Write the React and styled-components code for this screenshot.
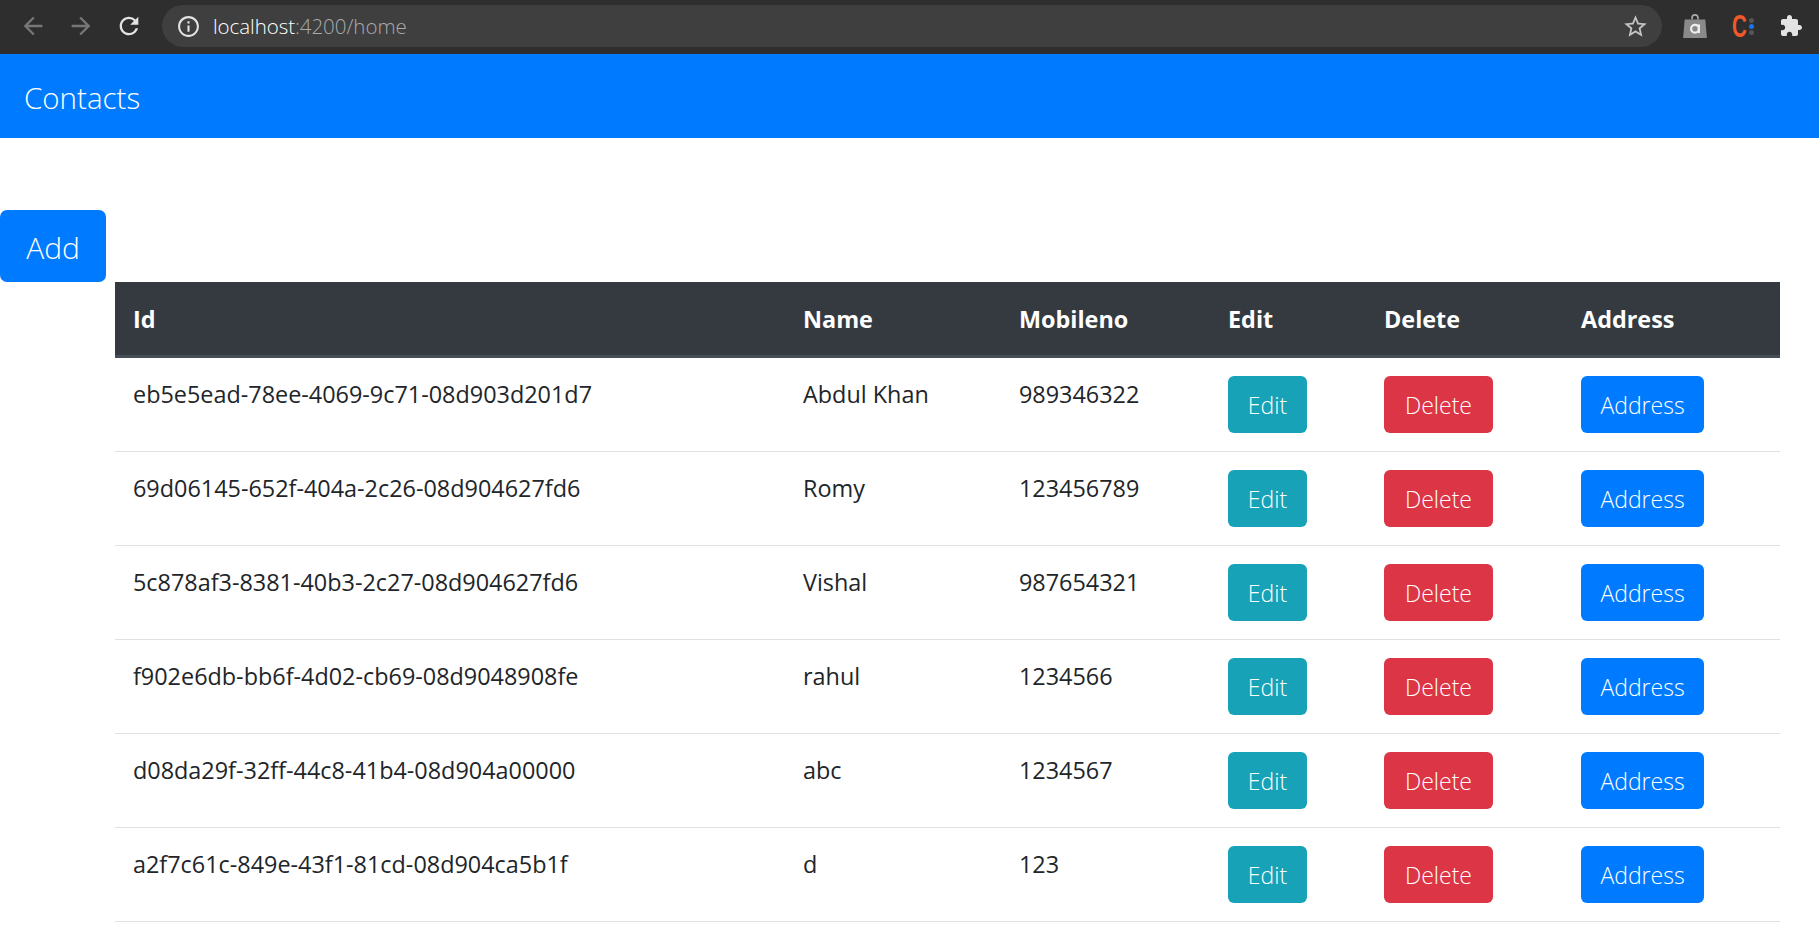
import React from "react";
import styled, { createGlobalStyle } from "styled-components";

const contacts = [
  { id: "eb5e5ead-78ee-4069-9c71-08d903d201d7", name: "Abdul Khan", mobile: "989346322" },
  { id: "69d06145-652f-404a-2c26-08d904627fd6", name: "Romy", mobile: "123456789" },
  { id: "5c878af3-8381-40b3-2c27-08d904627fd6", name: "Vishal", mobile: "987654321" },
  { id: "f902e6db-bb6f-4d02-cb69-08d9048908fe", name: "rahul", mobile: "1234566" },
  { id: "d08da29f-32ff-44c8-41b4-08d904a00000", name: "abc", mobile: "1234567" },
  { id: "a2f7c61c-849e-43f1-81cd-08d904ca5b1f", name: "d", mobile: "123" },
];

const GlobalStyle = createGlobalStyle`
  html, body {
    margin: 0;
    height: 100%;
    overflow: hidden;
    background: #fff;
    font-family: "Open Sans", "Liberation Sans", sans-serif;
    color: #212529;
  }
  * { box-sizing: border-box; }
`;

const Toolbar = styled.div`
  height: 54px;
  background: #2e2e2e;
  display: flex;
  align-items: center;
  padding: 0 16px 2px 19px;
`;

const NavIcons = styled.div`
  display: flex;
  align-items: center;
  gap: 20px;
  margin-right: 19px;
`;

const Icon = styled.svg`
  width: ${(p) => p.$size || 28}px;
  height: ${(p) => p.$size || 28}px;
  fill: ${(p) => p.$color || "#e3e3e3"};
  flex: none;
  display: block;
`;

const Omnibox = styled.div`
  flex: 1;
  height: 42px;
  background: #3f3f3f;
  border-radius: 21px;
  display: flex;
  align-items: center;
  padding: 0 13px 0 14px;
  font-size: 20.5px;
`;

const Url = styled.span`
  margin-left: 12px;
  flex: 1;
  color: #fff;
  font-weight: 300;
  letter-spacing: -0.05px;
  span {
    color: #aaa;
  }
`;

const Extensions = styled.div`
  display: flex;
  align-items: center;
  margin-left: 20px;
`;

const LogoC = styled.div`
  display: flex;
  align-items: center;
  width: 23px;
  margin: 0 24px;
  color: #f1592a;
  font-family: "Liberation Sans", sans-serif;
  font-weight: 700;
  font-size: 31px;
  line-height: 1;
`;

const LogoLetter = styled.span`
  display: inline-block;
  width: 15px;
  transform: scaleX(0.66);
  transform-origin: left center;
`;

const Dots = styled.div`
  display: flex;
  flex-direction: column;
  gap: 1px;
  margin-left: 2px;
`;

const Dot = styled.i`
  width: 5px;
  height: 5px;
  border-radius: 50%;
  background: ${(p) => p.$color};
`;

const Navbar = styled.nav`
  height: 84px;
  background: #007bff;
  display: flex;
  align-items: center;
  padding: 2px 24px 0;
`;

const Brand = styled.a`
  color: #fff;
  font-size: 29.5px;
  font-weight: 300;
`;

const Content = styled.main`
  padding-top: 72px;
`;

const AddButton = styled.button`
  display: block;
  width: 106px;
  height: 72px;
  padding: 2px 0 0;
  background: #007bff;
  border: none;
  border-radius: 7px;
  color: #fff;
  font-family: inherit;
  font-size: 30px;
  font-weight: 300;
`;

const Table = styled.table`
  width: 1665px;
  margin-left: 115px;
  border-collapse: separate;
  border-spacing: 0;
  table-layout: fixed;
`;

const Head = styled.th`
  background: #343a40;
  color: #fff;
  text-align: left;
  font-size: 23.4px;
  font-weight: 700;
  height: 76px;
  padding: 0 18px;
  border-bottom: 3px solid #454d55;
  width: ${(p) => p.$width}px;
`;

const Cell = styled.td`
  vertical-align: top;
  padding: 18px;
  font-size: 23.4px;
  line-height: 36px;
  height: 94px;
  border-bottom: 1px solid #dee2e6;
`;

const ActionButton = styled.button`
  display: block;
  width: ${(p) => p.$width}px;
  height: 57px;
  padding: 1px 0 0;
  background: ${(p) => p.$bg};
  border: none;
  border-radius: 6px;
  color: #fff;
  font-family: inherit;
  font-size: 23px;
  font-weight: 300;
`;

const columns = [
  ["Id", 670],
  ["Name", 216],
  ["Mobileno", 209],
  ["Edit", 156],
  ["Delete", 197],
  ["Address", 217],
];

export default function App() {
  return (
    <>
      <GlobalStyle />
      <Toolbar>
        <NavIcons>
          <Icon viewBox="0 0 24 24" $color="#777">
            <path d="M20 11H7.83l5.59-5.59L12 4l-8 8 8 8 1.41-1.41L7.83 13H20v-2z" />
          </Icon>
          <Icon viewBox="0 0 24 24" $color="#777">
            <path d="M4 11h12.17l-5.59-5.59L12 4l8 8-8 8-1.41-1.41L16.17 13H4v-2z" />
          </Icon>
          <Icon viewBox="0 0 24 24">
            <path d="M17.65 6.35A7.958 7.958 0 0 0 12 4c-4.42 0-7.99 3.58-7.99 8s3.57 8 7.99 8c3.73 0 6.84-2.55 7.73-6h-2.08A5.99 5.99 0 0 1 12 18c-3.31 0-6-2.69-6-6s2.69-6 6-6c1.66 0 3.14.69 4.22 1.78L13 11h7V4l-2.35 2.35z" />
          </Icon>
        </NavIcons>
        <Omnibox>
          <Icon viewBox="0 0 24 24" $size={25}>
            <path d="M11 7h2v2h-2V7zm0 4h2v6h-2v-6zm1-9C6.48 2 2 6.48 2 12s4.48 10 10 10 10-4.48 10-10S17.52 2 12 2zm0 18c-4.41 0-8-3.59-8-8s3.59-8 8-8 8 3.59 8 8-3.59 8-8 8z" />
          </Icon>
          <Url>
            localhost<span>:4200/home</span>
          </Url>
          <Icon viewBox="0 0 24 24" $size={27} $color="#c4c4c4">
            <path d="M22 9.24l-7.19-.62L12 2 9.19 8.63 2 9.24l5.46 4.73L5.82 21 12 17.27 18.18 21l-1.63-7.03L22 9.24zM12 15.4l-3.76 2.27 1-4.28-3.32-2.88 4.38-.38L12 6.1l1.71 4.04 4.38.38-3.32 2.88 1 4.28L12 15.4z" />
          </Icon>
        </Omnibox>
        <Extensions>
          <Icon viewBox="0 0 24 24" $size={26} $color="#8a8a8a">
            <path d="M8.5 6V4.5a3.5 3.5 0 0 1 7 0V6H14V4.5a2 2 0 0 0-4 0V6H8.5z" fill="#aaa" />
            <path d="M2.5 6h19L23 23H1L2.5 6z" />
            <circle cx="12" cy="14.5" r="3.6" fill="none" stroke="#eee" strokeWidth="2" />
            <rect x="14.6" y="10.5" width="2" height="8" fill="#eee" />
          </Icon>
          <LogoC>
            <LogoLetter>C</LogoLetter>
            <Dots>
              <Dot $color="#555" />
              <Dot $color="#1a73e8" />
              <Dot $color="#555" />
            </Dots>
          </LogoC>
          <Icon viewBox="0 0 24 24" $size={24}>
            <path d="M20.5 11H19V7c0-1.1-.9-2-2-2h-4V3.5C13 2.12 11.88 1 10.5 1S8 2.12 8 3.5V5H4c-1.1 0-1.99.9-1.99 2v3.8H3.5c1.49 0 2.7 1.21 2.7 2.7s-1.21 2.7-2.7 2.7H2V20c0 1.1.9 2 2 2h3.8v-1.5c0-1.49 1.21-2.7 2.7-2.7 1.49 0 2.7 1.21 2.7 2.7V22H17c1.1 0 2-.9 2-2v-4h1.5c1.38 0 2.5-1.12 2.5-2.5S21.88 11 20.5 11z" />
          </Icon>
        </Extensions>
      </Toolbar>
      <Navbar>
        <Brand>Contacts</Brand>
      </Navbar>
      <Content>
        <AddButton>Add</AddButton>
        <Table>
          <thead>
            <tr>
              {columns.map(([label, width]) => (
                <Head key={label} $width={width}>
                  {label}
                </Head>
              ))}
            </tr>
          </thead>
          <tbody>
            {contacts.map((c) => (
              <tr key={c.id}>
                <Cell>{c.id}</Cell>
                <Cell>{c.name}</Cell>
                <Cell>{c.mobile}</Cell>
                <Cell>
                  <ActionButton $bg="#17a2b8" $width={79}>Edit</ActionButton>
                </Cell>
                <Cell>
                  <ActionButton $bg="#dc3545" $width={109}>Delete</ActionButton>
                </Cell>
                <Cell>
                  <ActionButton $bg="#007bff" $width={123}>Address</ActionButton>
                </Cell>
              </tr>
            ))}
          </tbody>
        </Table>
      </Content>
    </>
  );
}
